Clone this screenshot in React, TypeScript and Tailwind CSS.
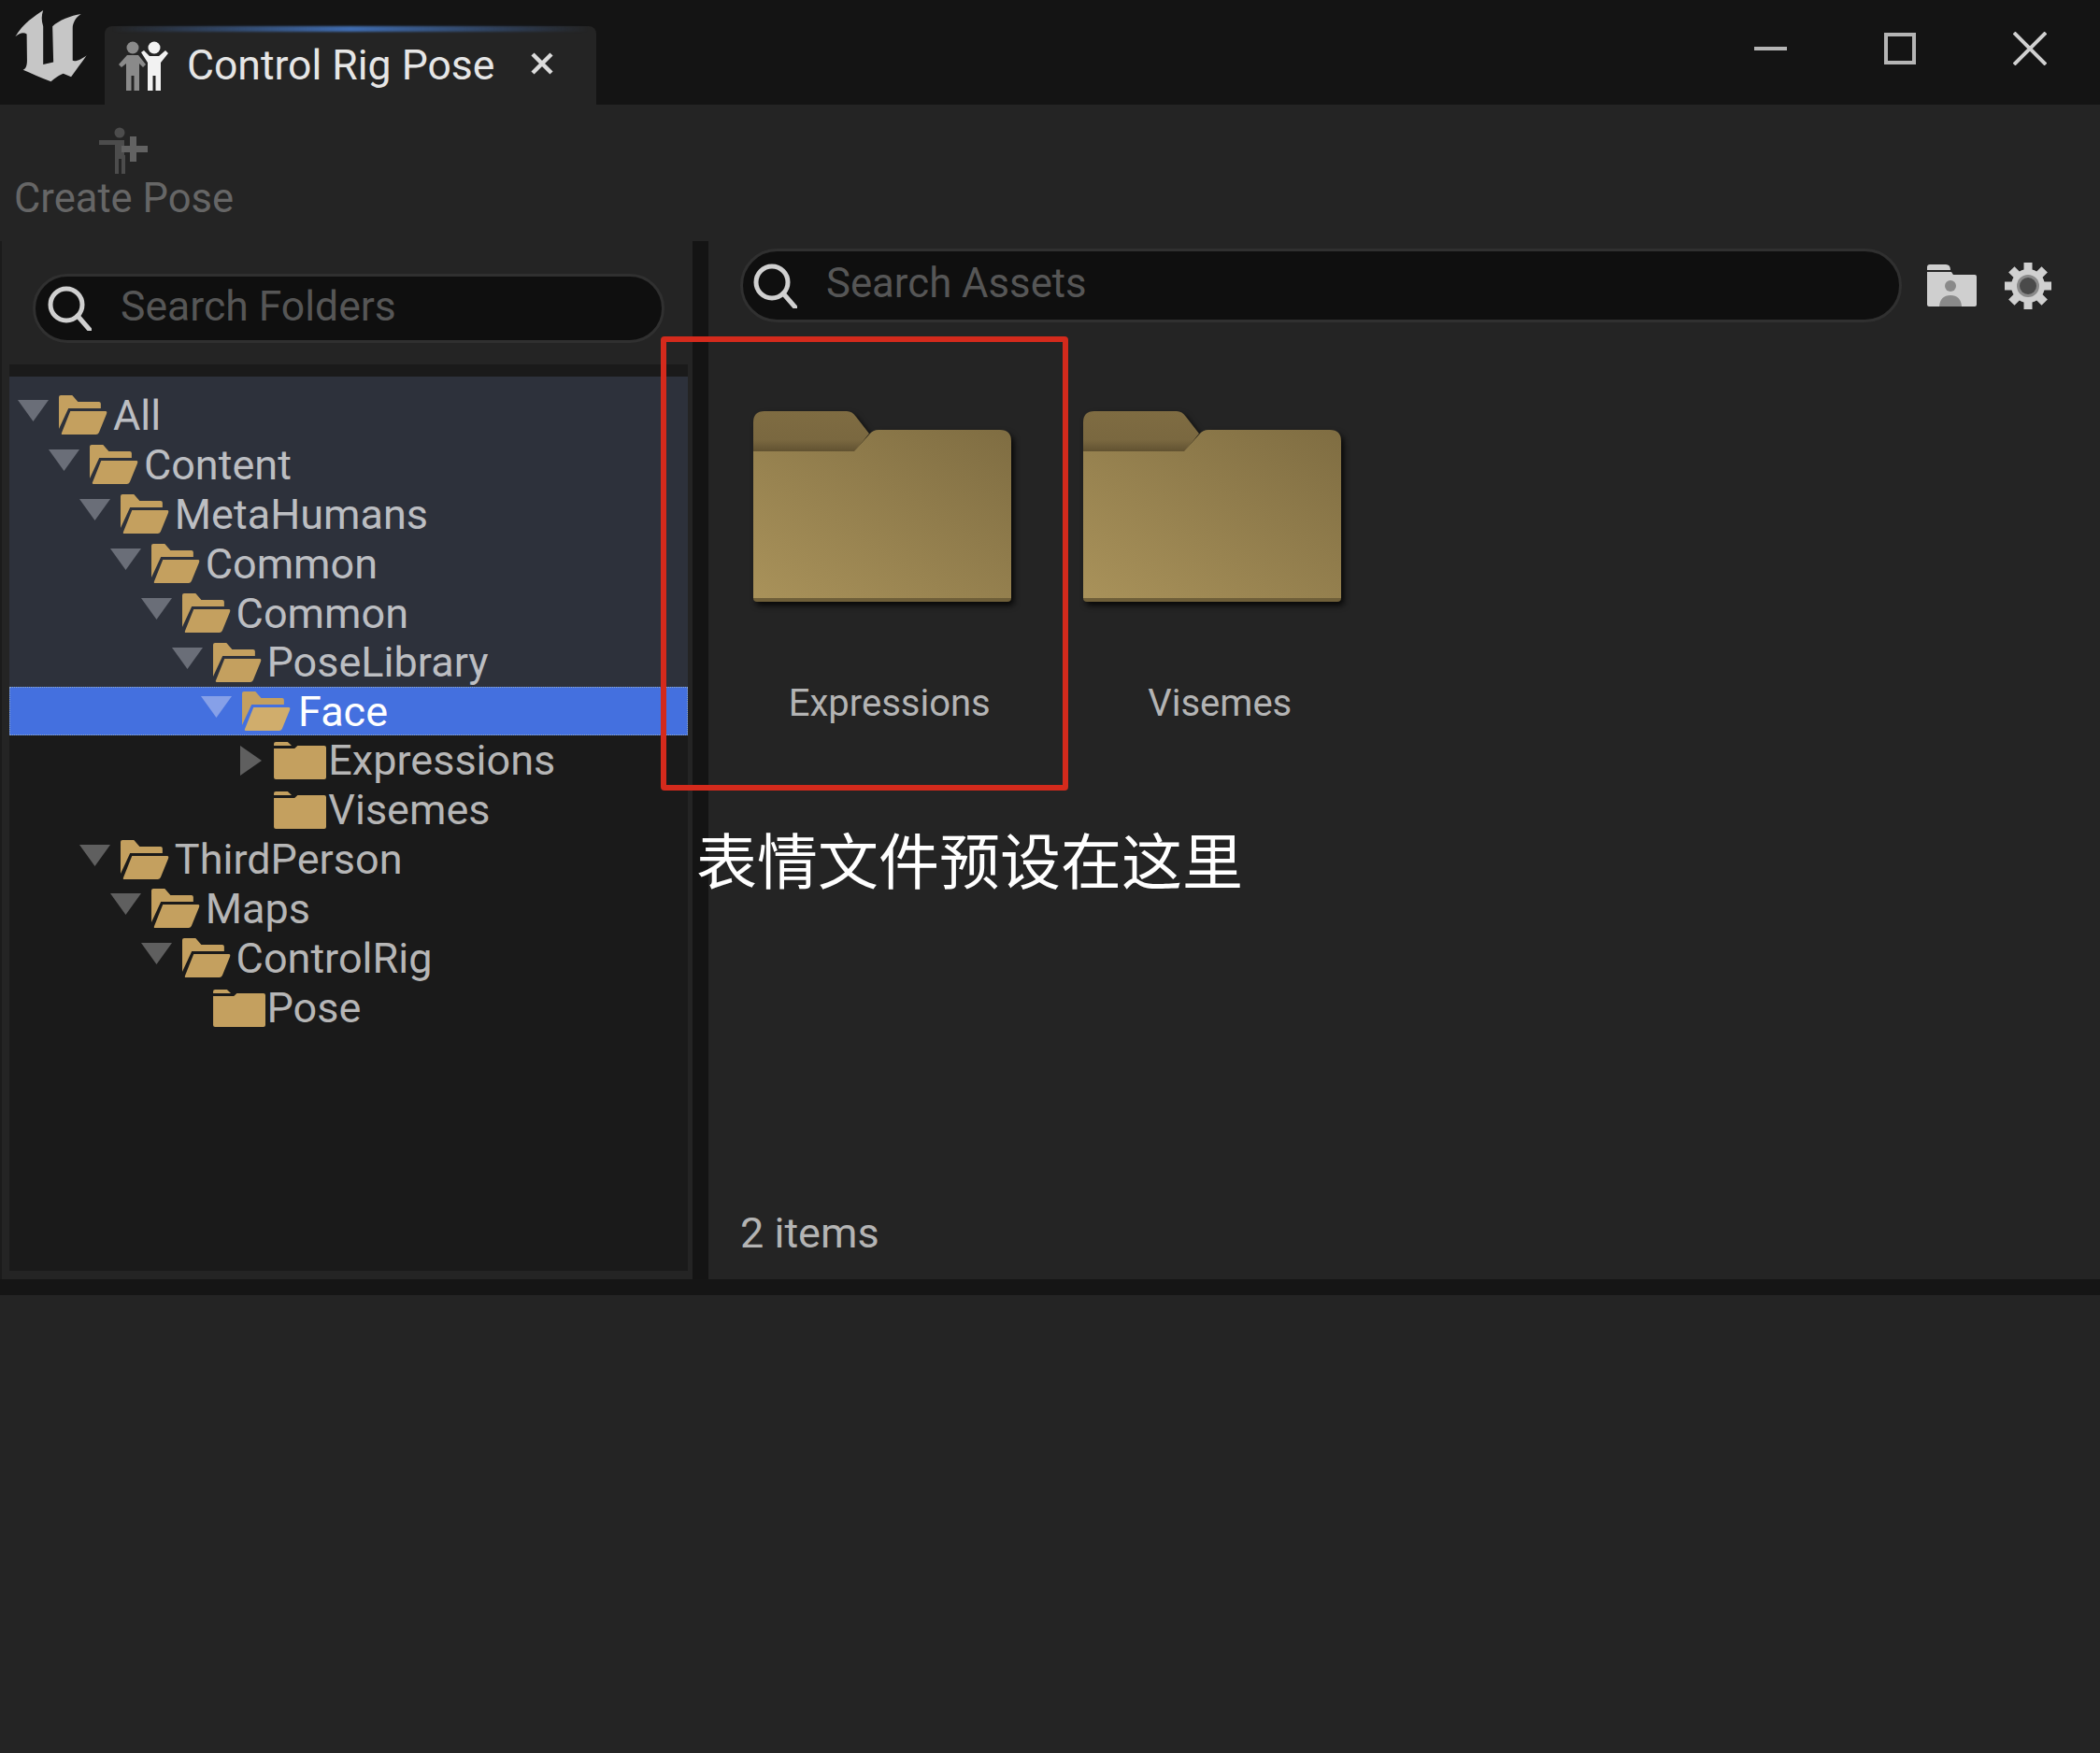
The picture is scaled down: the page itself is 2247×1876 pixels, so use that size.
const sans = "font-['Roboto','Liberation_Sans',sans-serif]";

type Node = { label: string; level: number; open?: boolean; closed?: boolean; hasArrow?: boolean };

const slateRows: Node[] = [
  { label: "All", level: 0, open: true, hasArrow: true },
  { label: "Content", level: 1, open: true, hasArrow: true },
  { label: "MetaHumans", level: 2, open: true, hasArrow: true },
  { label: "Common", level: 3, open: true, hasArrow: true },
  { label: "Common", level: 4, open: true, hasArrow: true },
  { label: "PoseLibrary", level: 5, open: true, hasArrow: true },
];

const plainRows: Node[] = [
  { label: "Expressions", level: 7, closed: true, hasArrow: true },
  { label: "Visemes", level: 7, closed: true },
  { label: "ThirdPerson", level: 2, open: true, hasArrow: true },
  { label: "Maps", level: 3, open: true, hasArrow: true },
  { label: "ControlRig", level: 4, open: true, hasArrow: true },
  { label: "Pose", level: 5, closed: true },
];

const UeLogo = () => (
  <svg width="83" height="82" viewBox="40 25 250 245" className="shrink-0">
    <path
      fill="#c6c6c6"
      d="M140 33C115 50 75 75 50 118C65 105 78 103 87 110L88 195C88 210 85 222 75 225C100 235 130 250 165 263C180 250 195 240 205 237L230 248C245 225 265 200 280 178C265 190 245 200 235 195L235 90C235 75 245 55 262 45C230 50 190 65 170 85L173 200L140 208L140 85C134 65 134 50 140 33Z"
    />
  </svg>
);

const PosesIcon = () => (
  <svg width="55" height="54" viewBox="0 0 55 54" className="shrink-0">
    <g fill="#8a8a8a">
      <circle cx="15" cy="7" r="6.5" />
      <path d="M9 15H21L29 25L26 28L22 24V53H16.5V37H13.5V53H8V24L3 28L0 25Z" />
    </g>
    <g fill="#f2f2f2">
      <circle cx="38" cy="7" r="6.5" />
      <path d="M24 12L27 10L33 16H43L50 10L53 13L45 23V53H39.5V37H36.5V53H31V23Z" />
    </g>
  </svg>
);

const CreatePoseIcon = () => (
  <svg width="52" height="50" viewBox="0 0 52 50" className="shrink-0">
    <g fill="#4c4c4c">
      <circle cx="22" cy="6" r="5.5" />
      <path d="M0 14H27V30H28V50H24V34H21V50H17V19H0Z" />
    </g>
    <path fill="#626262" d="M33 10H40V20H52V27H40V37H33V27H24V20H33Z" />
  </svg>
);

const SearchIcon = () => (
  <svg width="48" height="48" viewBox="0 0 48 48" fill="none" stroke="#d0d0d0" strokeWidth="5" className="shrink-0">
    <circle cx="21" cy="20" r="17" />
    <path d="M33 32L46 47" strokeLinecap="round" />
  </svg>
);

const OpenFolder = ({ selected }: { selected?: boolean }) => (
  <svg width="53" height="42" viewBox="0 0 52 42" preserveAspectRatio="none" className="shrink-0">
    <path fill="#c4a05f" d="M1 2Q1 0 3 0H15L21 7H43Q45 7 45 9V14H11L1 36Z" />
    <path fill={selected ? "#d0ad6c" : "#c4a05f"} d="M13 17H50Q52 17 51 20L43 40Q42 42 40 42H5Q3 42 4 40Z" />
  </svg>
);

const ClosedFolder = () => (
  <svg width="57" height="41" viewBox="0 0 54 41" preserveAspectRatio="none" className="shrink-0">
    <path fill="#c4a05f" d="M1 3Q1 1 3 1H15L19 5H1Z" />
    <path fill="#c4a05f" d="M1 8H22L25 5H52Q54 5 54 7V39Q54 41 52 41H3Q1 41 1 39Z" />
  </svg>
);

const Arrow = ({ down, color }: { down: boolean; color: string }) =>
  down ? (
    <svg width="33" height="24" viewBox="0 0 33 24" className="shrink-0 -mt-[8px]">
      <path fill={color} d="M0 0H33L16.5 23Z" />
    </svg>
  ) : (
    <div className="w-[33px] shrink-0 flex justify-end pr-[2px]">
      <svg width="23" height="32" viewBox="0 0 23 32">
        <path fill={color} d="M0 0L23 16L0 32Z" />
      </svg>
    </div>
  );

const TreeRow = ({ node, color, arrow }: { node: Node; color: string; arrow: string }) => (
  <div
    className={`flex items-center h-[52.9px] text-[45px] leading-none ${color}`}
    style={{ paddingLeft: 9 + node.level * 32.9 }}
  >
    {node.hasArrow ? <Arrow down={!node.closed} color={arrow} /> : <div className="w-[33px] shrink-0" />}
    <div className="ml-[10px] mr-[9px] shrink-0 flex">{node.closed ? <ClosedFolder /> : <OpenFolder />}</div>
    <span className={node.closed ? "-ml-[7px]" : "-ml-[3px]"}>{node.label}</span>
  </div>
);

const BigFolder = ({ id }: { id: string }) => (
  <svg width="278" height="208" viewBox="0 0 278 208" className="drop-shadow-[3px_4px_3px_rgba(0,0,0,0.8)]">
    <defs>
      <linearGradient id={id} x1="0" y1="1" x2="1" y2="0">
        <stop offset="0" stopColor="#a9925a" />
        <stop offset="1" stopColor="#7f6d42" />
      </linearGradient>
      <linearGradient id={`${id}-tab`} x1="0" y1="0" x2="0" y2="1">
        <stop offset="0" stopColor="#7f6c42" />
        <stop offset="0.7" stopColor="#7a6840" />
        <stop offset="1" stopColor="#5f5030" />
      </linearGradient>
    </defs>
    <path fill={`url(#${id}-tab)`} d="M0 12Q0 0 12 0H100Q106 0 110 6L124 24L108 44H0Z" />
    <path fill="#6f5f39" d="M0 196H276V200Q276 204 272 204H4Q0 204 0 200Z" />
    <path fill={`url(#${id})`} d="M0 43H108L124 25Q128 20 134 20H264Q276 20 276 32V200H0Z" />
  </svg>
);

const FolderTile = ({ id, label }: { id: string; label: string }) => (
  <div className="w-[353.5px] flex flex-col items-center">
    <BigFolder id={id} />
    <div className="mt-[81px] pl-[14px] text-[40px] leading-[48px] text-[#b4b4b4]">{label}</div>
  </div>
);

const SavedFolderIcon = () => (
  <svg width="53" height="45" viewBox="0 0 53 45" className="shrink-0">
    <path fill="#cfcfcf" d="M0 3Q0 0 3 0H20Q25 0 25 6H0Z" />
    <path fill="#cfcfcf" d="M0 8H26L28 11H51Q53 11 53 13V43Q53 45 51 45H2Q0 45 0 43Z" />
    <circle cx="25" cy="23" r="6" fill="#8a8a8a" />
    <path fill="#8a8a8a" d="M13 45Q14 33 25 33Q36 33 37 45Z" />
  </svg>
);

const teeth = [0, 45, 90, 135, 180, 225, 270, 315];

const GearIcon = () => (
  <svg width="50" height="52" viewBox="0 0 50 52" className="shrink-0">
    <g fill="#d0d0d0">
      {teeth.map((a) => (
        <rect key={a} x="20.5" y="1" width="9" height="12" transform={`rotate(${a} 25 26)`} />
      ))}
    </g>
    <circle cx="25" cy="26" r="18" fill="#d0d0d0" />
    <circle cx="25" cy="26" r="12" fill="#8a8a8a" />
    <circle cx="25" cy="26" r="9" fill="#4a4a4a" />
  </svg>
);

export default function App() {
  return (
    <div className={`relative flex flex-col h-[1876px] w-[2247px] overflow-hidden bg-[#242424] ${sans}`}>
      {/* title bar */}
      <div className="flex h-[112px] shrink-0 bg-[#141414] pl-[13px] pr-[57px]">
        <div className="pt-[8px] w-[99px] shrink-0">
          <UeLogo />
        </div>
        <div className="relative mt-[28px] flex w-[526px] items-center rounded-t-[8px] bg-[#242424] pl-[15px] pt-[1px]">
          <div className="absolute left-[8px] right-[8px] top-0 h-[6px] bg-gradient-to-r from-transparent via-[#3f6cb0] to-transparent blur-[1px]" />
          <PosesIcon />
          <span className="ml-[18px] text-[44.5px] leading-none text-[#e6e6e6]">Control Rig Pose</span>
          <svg width="24" height="24" viewBox="0 0 24 24" className="ml-[39px] -mt-[6px]" stroke="#dcdcdc" strokeWidth="4.5" fill="none">
            <path d="M2 2L22 22M22 2L2 22" />
          </svg>
        </div>
        <div className="ml-auto flex items-center gap-[104px] pb-[8px]">
          <div className="h-[4px] w-[35px] bg-[#b5b5b5]" />
          <div className="h-[34px] w-[34px] border-4 border-[#b5b5b5]" />
          <svg width="36" height="36" viewBox="0 0 36 36" stroke="#d0d0d0" strokeWidth="4" fill="none">
            <path d="M1 1L35 35M35 1L1 35" />
          </svg>
        </div>
      </div>

      {/* toolbar */}
      <div className="h-[146px] shrink-0 pl-[15px] pt-[24px]">
        <div className="flex w-fit flex-col items-center">
          <CreatePoseIcon />
          <span className="mt-[3px] text-[43.5px] leading-[48px] text-[#666666]">Create Pose</span>
        </div>
      </div>

      {/* split */}
      <div className="flex h-[1111px] shrink-0 border-l-2 border-[#1b1b1b]">
        <div className="flex w-[739px] shrink-0 flex-col pt-[35px]">
          <div className="ml-[33px] flex h-[74px] w-[676px] shrink-0 items-center rounded-full border-[3px] border-[#303030] bg-[#0f0f0f] pl-[12px]">
            <SearchIcon />
            <span className="ml-[31px] pb-[3px] text-[44.5px] leading-none text-[#565656]">Search Folders</span>
          </div>
          <div className="ml-[8px] mr-[5px] mt-[23px] flex h-[970px] flex-col bg-[#1a1a1a]">
            <div className="h-[13px] shrink-0 bg-[#1a1a1a]" />
            <div className="bg-[#2d313b] pt-[15px]">
              {slateRows.map((node, i) => (
                <TreeRow key={i} node={node} color="text-[#bcbec2]" arrow="#6a6e78" />
              ))}
            </div>
            <div className="flex h-[52px] items-center border border-dotted border-[#8fa8c8] bg-[#4470df] pl-[204px] text-[45px] leading-none text-white">
              <Arrow down color="#86a0e8" />
              <div className="ml-[10px] mr-[8px] flex shrink-0">
                <OpenFolder selected />
              </div>
              <span>Face</span>
            </div>
            {plainRows.map((node, i) => (
              <TreeRow key={i} node={node} color="text-[#b6b6b6]" arrow="#5f5f5f" />
            ))}
          </div>
        </div>
        <div className="w-[17px] shrink-0 bg-[#141414]" />
        <div className="flex flex-1 flex-col pl-[10px] pr-[5px]">
          <div className="mt-[8px] flex items-center">
            <div className="ml-[24px] flex h-[79px] w-[1243px] items-center rounded-full border-[3px] border-[#303030] bg-[#0f0f0f] pl-[10px]">
              <SearchIcon />
              <span className="ml-[31px] pb-[3px] text-[43.7px] leading-none text-[#565656]">Search Assets</span>
            </div>
            <div className="ml-[27px]">
              <SavedFolderIcon />
            </div>
            <div className="ml-[30px]">
              <GearIcon />
            </div>
          </div>
          <div className="mt-[95px] flex">
            <FolderTile id="folderA" label="Expressions" />
            <FolderTile id="folderB" label="Visemes" />
          </div>
          <div className="mb-[25px] ml-[24px] mt-auto text-[45px] leading-[48px] text-[#b4b4b4]">2 items</div>
        </div>
      </div>

      <div className="h-[17px] shrink-0 bg-[#151515]" />
      <div className="flex-1 bg-[#242424]" />

      {/* annotation */}
      <div className="absolute left-[707px] top-[360px] h-[486px] w-[436px] rounded-[4px] border-[6px] border-[#d42a1c]" />
      <div className="absolute left-[745px] top-[878px] text-[65px] leading-[80px] text-white font-['Noto_Sans_CJK_SC','Noto_Sans',sans-serif]">
        表情文件预设在这里
      </div>
    </div>
  );
}
